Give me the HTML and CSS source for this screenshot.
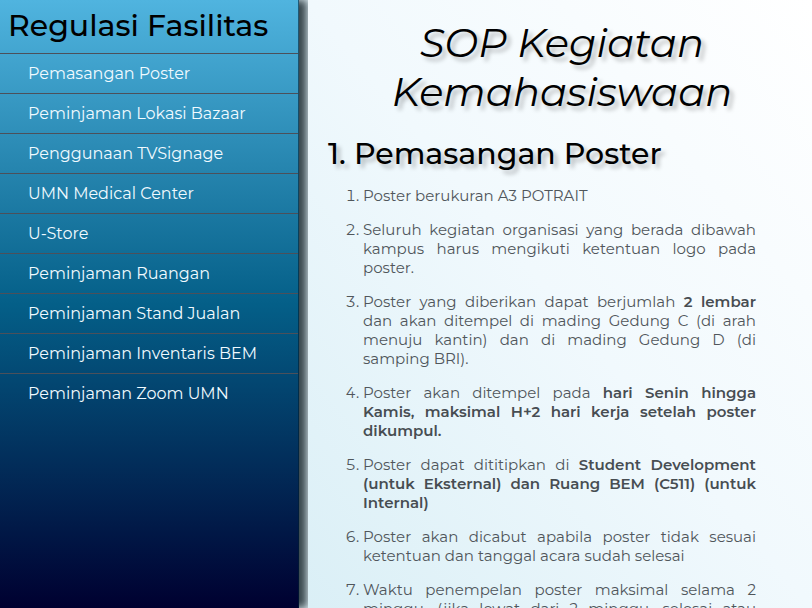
FILE: index.html
```html
<!DOCTYPE html>
<html lang="id">
<head>
<meta charset="utf-8">
<meta name="viewport" content="width=device-width, initial-scale=1">
<title>Regulasi Fasilitas</title>
<link rel="stylesheet" href="styles.css">
</head>
<body>
<div class="page">
  <nav class="sidebar">
    <h2 class="sidebar-title">Regulasi Fasilitas</h2>
    <a class="nav-link" href="#poster">Pemasangan Poster</a>
    <a class="nav-link" href="#bazaar">Peminjaman Lokasi Bazaar</a>
    <a class="nav-link" href="#tvsignage">Penggunaan TVSignage</a>
    <a class="nav-link" href="#medical">UMN Medical Center</a>
    <a class="nav-link" href="#ustore">U-Store</a>
    <a class="nav-link" href="#ruangan">Peminjaman Ruangan</a>
    <a class="nav-link" href="#stand">Peminjaman Stand Jualan</a>
    <a class="nav-link" href="#inventaris">Peminjaman Inventaris BEM</a>
    <a class="nav-link" href="#zoom">Peminjaman Zoom UMN</a>
  </nav>
  <main class="content">
    <h1 class="title">SOP Kegiatan Kemahasiswaan</h1>
    <h2 class="section-title" id="poster">1. Pemasangan Poster</h2>
    <ol class="rules">
      <li>Poster berukuran A3 POTRAIT</li>
      <li>Seluruh kegiatan organisasi yang berada dibawah kampus harus mengikuti ketentuan logo pada poster.</li>
      <li>Poster yang diberikan dapat berjumlah <b>2 lembar</b> dan akan ditempel di mading Gedung C (di arah menuju kantin) dan di mading Gedung D (di samping BRI).</li>
      <li>Poster akan ditempel pada <b>hari Senin hingga Kamis, maksimal H+2 hari kerja setelah poster dikumpul.</b></li>
      <li>Poster dapat dititipkan di <b>Student Development (untuk Eksternal) dan Ruang BEM (C511) (untuk Internal)</b></li>
      <li>Poster akan dicabut apabila poster tidak sesuai ketentuan dan tanggal acara sudah selesai</li>
      <li class="full-lines">Waktu penempelan poster maksimal selama 2 minggu, (jika lewat dari 2 minggu, selesai atau</li>
    </ol>
  </main>
</div>
</body>
</html>
```
FILE: styles.css
```css
* {
  box-sizing: border-box;
}

body {
  margin: 0;
  font-family: Montserrat, Inter, "Open Sans", sans-serif;
  color: #000;
}

.page {
  display: flex;
  height: 100vh;
  overflow: hidden;
  background: #dfeff6;
}

.sidebar {
  flex: 0 0 299px;
  border-right: 1px solid rgba(0, 30, 50, 0.6);
  background: linear-gradient(#50b4df 0%, #045f88 50%, #000030 100%);
  box-shadow: 8px 0 8px rgba(0, 15, 20, 0.75);
  z-index: 1;
}

.sidebar-title {
  margin: 0;
  padding: 6px 8px 7px;
  font-size: 30px;
  line-height: 40px;
  font-weight: 500;
}

.nav-link {
  display: block;
  padding: 10px 28px 9px;
  border-top: 1px solid #4c505a;
  color: #f0faff;
  font-size: 16px;
  line-height: 20px;
  text-decoration: none;
}

.content {
  flex: 1;
  min-width: 0;
  margin-left: 9px;
  padding: 18px 16px 0 20px;
  background: linear-gradient(to top right, #daeff6, #f1f9fd 50%, #fff);
  z-index: 2;
}

.title {
  margin: 0 0 20px;
  font-size: 40px;
  line-height: 49px;
  font-weight: 400;
  font-style: italic;
  text-align: center;
  text-shadow: 4px 4px 4px rgba(0, 0, 0, 0.25);
}

.section-title {
  margin: 0 0 14px;
  font-size: 30px;
  line-height: 36px;
  font-weight: 500;
  text-shadow: 4px 4px 4px rgba(0, 0, 0, 0.25);
}

.rules {
  margin: 0;
  padding: 0 40px 0 35px;
  color: #50565b;
  font-size: 15px;
  line-height: 19px;
  text-align: justify;
}

.rules li {
  margin-bottom: 15px;
}

.rules .full-lines {
  text-align-last: justify;
}

.rules b {
  font-weight: 600;
  color: #474d52;
}
```
